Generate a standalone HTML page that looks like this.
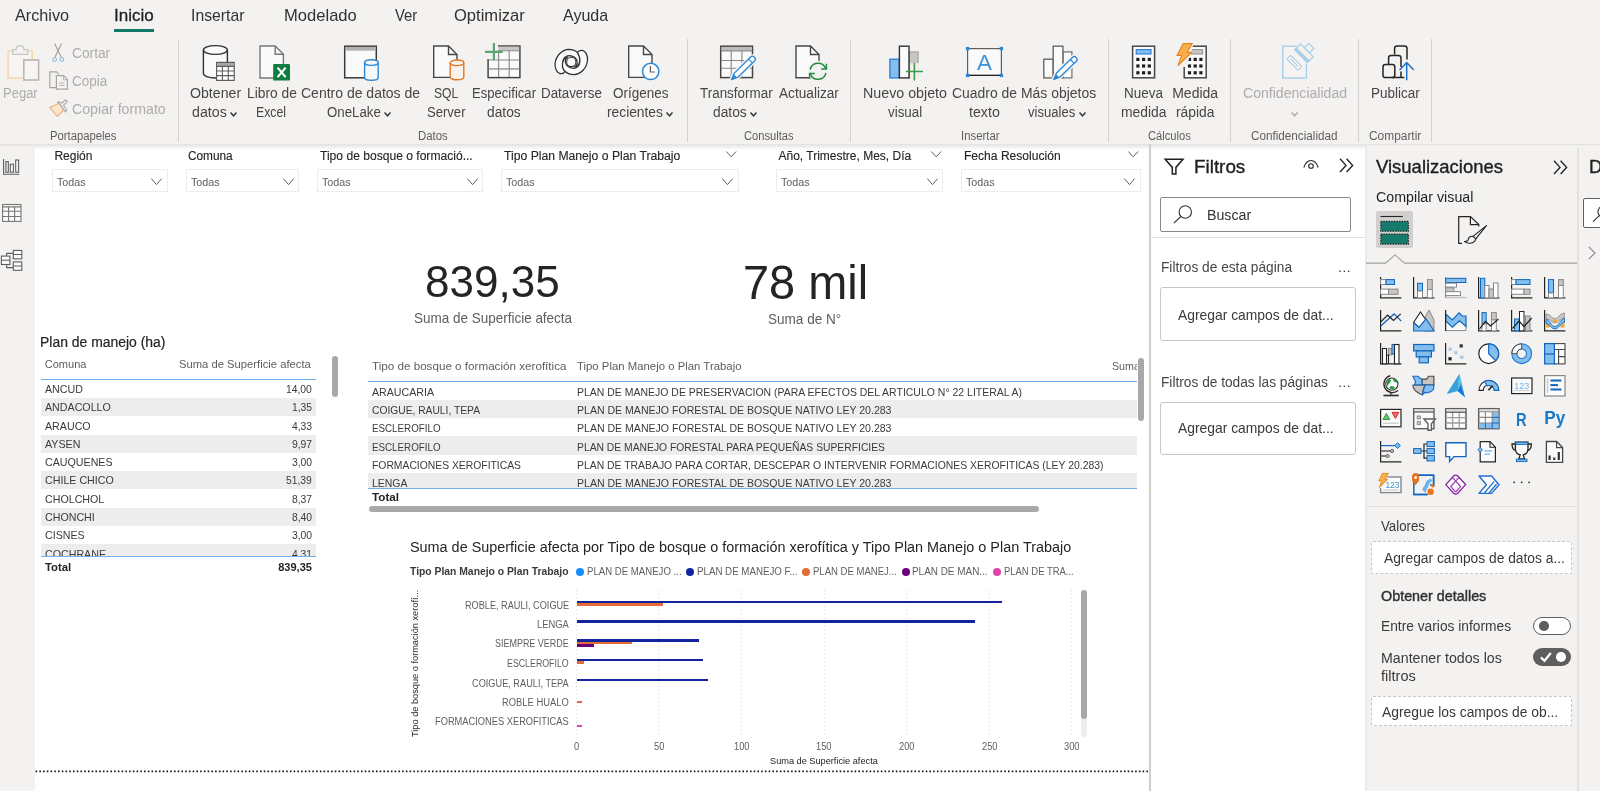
<!DOCTYPE html>
<html lang="es"><head><meta charset="utf-8"><title>Power BI Desktop</title>
<style>
html,body{margin:0;padding:0;}
body{width:1600px;height:791px;overflow:hidden;position:relative;background:#fff;font-family:"Liberation Sans",sans-serif;}
.t{position:absolute;white-space:nowrap;transform-origin:0 0;display:block;}
.b{position:absolute;}
.i{position:absolute;overflow:visible;}
</style></head><body>
<div id="app" style="position:absolute;left:0;top:0;width:1600px;height:791px;will-change:transform;">
<div id="ribbon">
<div class="b " style="left:0.00px;top:0.00px;width:1600.00px;height:144.00px;background:#f3f2f1;"></div>
<div class="b " style="left:0.00px;top:143.50px;width:1600.00px;height:6.50px;background:linear-gradient(#e2e1df,rgba(255,255,255,0));"></div>
</div>
<div class="b " style="left:0.00px;top:144.00px;width:35.00px;height:647.00px;background:#f3f2f1;"></div>
<div class="b " style="left:0.00px;top:144.00px;width:35.00px;height:3.00px;background:linear-gradient(#e2e1df,#f3f2f1);"></div>
<span class="t " style="left:14.70px;top:7.20px;font-size:17px;line-height:17px;color:#323130;transform:scaleX(0.9543);">Archivo</span>
<span class="t " style="left:114.00px;top:7.20px;font-size:17px;line-height:17px;color:#201f1e;-webkit-text-stroke:0.3px #201f1e;">Inicio</span>
<div class="b " style="left:114.00px;top:29.30px;width:40.00px;height:2.70px;background:#117865;"></div>
<span class="t " style="left:191.40px;top:7.20px;font-size:17px;line-height:17px;color:#323130;transform:scaleX(0.9265);">Insertar</span>
<span class="t " style="left:283.70px;top:7.20px;font-size:17px;line-height:17px;color:#323130;transform:scaleX(0.9750);">Modelado</span>
<span class="t " style="left:394.50px;top:7.20px;font-size:17px;line-height:17px;color:#323130;transform:scaleX(0.8700);">Ver</span>
<span class="t " style="left:453.90px;top:7.20px;font-size:17px;line-height:17px;color:#323130;transform:scaleX(0.9734);">Optimizar</span>
<span class="t " style="left:562.60px;top:7.20px;font-size:17px;line-height:17px;color:#323130;transform:scaleX(0.9437);">Ayuda</span>
<div class="b " style="left:177.80px;top:39.00px;width:1.00px;height:102.50px;background:#d2d0ce;"></div>
<div class="b " style="left:687.00px;top:39.00px;width:1.00px;height:102.50px;background:#d2d0ce;"></div>
<div class="b " style="left:850.10px;top:39.00px;width:1.00px;height:102.50px;background:#d2d0ce;"></div>
<div class="b " style="left:1108.00px;top:39.00px;width:1.00px;height:102.50px;background:#d2d0ce;"></div>
<div class="b " style="left:1230.10px;top:39.00px;width:1.00px;height:102.50px;background:#d2d0ce;"></div>
<div class="b " style="left:1358.00px;top:39.00px;width:1.00px;height:102.50px;background:#d2d0ce;"></div>
<div class="b " style="left:1430.90px;top:39.00px;width:1.00px;height:102.50px;background:#d2d0ce;"></div>
<span class="t " style="left:3.30px;top:86.20px;font-size:14px;line-height:14px;color:#aeacaa;transform:scaleX(0.9288);">Pegar</span>
<span class="t " style="left:72.30px;top:46.20px;font-size:14px;line-height:14px;color:#aeacaa;transform:scaleX(0.9821);">Cortar</span>
<span class="t " style="left:72.30px;top:74.20px;font-size:14px;line-height:14px;color:#aeacaa;transform:scaleX(0.9623);">Copia</span>
<span class="t " style="left:72.30px;top:102.20px;font-size:14px;line-height:14px;color:#aeacaa;transform:scaleX(1.0119);">Copiar formato</span>
<span class="t " style="left:50.00px;top:130.20px;font-size:12px;line-height:12px;color:#605e5c;transform:scaleX(0.9375);">Portapapeles</span>
<span class="t " style="left:190.40px;top:86.20px;font-size:14px;line-height:14px;color:#484644;transform:scaleX(1.0101);">Obtener</span>
<span class="t " style="left:191.70px;top:105.20px;font-size:14px;line-height:14px;color:#484644;transform:scaleX(1.0161);">datos</span>
<svg class="i" style="left:229.70px;top:111.50px;" width="7" height="4.8" viewBox="0 0 7 4.8" fill="none"><path d="M0.5 0.5 L3.5 3.8 L6.5 0.5" stroke="#3b3a39" stroke-width="1.5" fill="none"/></svg>
<span class="t " style="left:246.50px;top:86.20px;font-size:14px;line-height:14px;color:#484644;transform:scaleX(0.9843);">Libro de</span>
<span class="t " style="left:256.40px;top:105.20px;font-size:14px;line-height:14px;color:#484644;transform:scaleX(0.8792);">Excel</span>
<span class="t " style="left:301.00px;top:86.20px;font-size:14px;line-height:14px;color:#484644;">Centro de datos de</span>
<span class="t " style="left:326.70px;top:105.20px;font-size:14px;line-height:14px;color:#484644;transform:scaleX(0.9468);">OneLake</span>
<svg class="i" style="left:383.70px;top:111.50px;" width="7" height="4.8" viewBox="0 0 7 4.8" fill="none"><path d="M0.5 0.5 L3.5 3.8 L6.5 0.5" stroke="#3b3a39" stroke-width="1.5" fill="none"/></svg>
<span class="t " style="left:433.60px;top:86.20px;font-size:14px;line-height:14px;color:#484644;transform:scaleX(0.8674);">SQL</span>
<span class="t " style="left:426.50px;top:105.20px;font-size:14px;line-height:14px;color:#484644;transform:scaleX(0.9336);">Server</span>
<span class="t " style="left:472.00px;top:86.20px;font-size:14px;line-height:14px;color:#484644;transform:scaleX(0.9347);">Especificar</span>
<span class="t " style="left:487.20px;top:105.20px;font-size:14px;line-height:14px;color:#484644;transform:scaleX(0.9840);">datos</span>
<span class="t " style="left:541.00px;top:86.20px;font-size:14px;line-height:14px;color:#484644;transform:scaleX(0.9529);">Dataverse</span>
<span class="t " style="left:613.00px;top:86.20px;font-size:14px;line-height:14px;color:#484644;transform:scaleX(0.9638);">Orígenes</span>
<span class="t " style="left:606.60px;top:105.20px;font-size:14px;line-height:14px;color:#484644;transform:scaleX(0.9840);">recientes</span>
<svg class="i" style="left:665.70px;top:111.50px;" width="7" height="4.8" viewBox="0 0 7 4.8" fill="none"><path d="M0.5 0.5 L3.5 3.8 L6.5 0.5" stroke="#3b3a39" stroke-width="1.5" fill="none"/></svg>
<span class="t " style="left:418.20px;top:130.20px;font-size:12px;line-height:12px;color:#605e5c;transform:scaleX(0.9506);">Datos</span>
<span class="t " style="left:700.40px;top:86.20px;font-size:14px;line-height:14px;color:#484644;transform:scaleX(0.9588);">Transformar</span>
<span class="t " style="left:712.80px;top:105.20px;font-size:14px;line-height:14px;color:#484644;transform:scaleX(0.9840);">datos</span>
<svg class="i" style="left:749.70px;top:111.50px;" width="7" height="4.8" viewBox="0 0 7 4.8" fill="none"><path d="M0.5 0.5 L3.5 3.8 L6.5 0.5" stroke="#3b3a39" stroke-width="1.5" fill="none"/></svg>
<span class="t " style="left:778.50px;top:86.20px;font-size:14px;line-height:14px;color:#484644;transform:scaleX(0.9744);">Actualizar</span>
<span class="t " style="left:744.40px;top:130.20px;font-size:12px;line-height:12px;color:#605e5c;transform:scaleX(0.9276);">Consultas</span>
<span class="t " style="left:863.20px;top:86.20px;font-size:14px;line-height:14px;color:#484644;transform:scaleX(1.0181);">Nuevo objeto</span>
<span class="t " style="left:888.00px;top:105.20px;font-size:14px;line-height:14px;color:#484644;transform:scaleX(0.9527);">visual</span>
<span class="t " style="left:951.70px;top:86.20px;font-size:14px;line-height:14px;color:#484644;transform:scaleX(0.9942);">Cuadro de</span>
<span class="t " style="left:968.90px;top:105.20px;font-size:14px;line-height:14px;color:#484644;transform:scaleX(1.0148);">texto</span>
<span class="t " style="left:1021.20px;top:86.20px;font-size:14px;line-height:14px;color:#484644;transform:scaleX(0.9949);">Más objetos</span>
<span class="t " style="left:1028.30px;top:105.20px;font-size:14px;line-height:14px;color:#484644;transform:scaleX(0.9332);">visuales</span>
<svg class="i" style="left:1078.70px;top:111.50px;" width="7" height="4.8" viewBox="0 0 7 4.8" fill="none"><path d="M0.5 0.5 L3.5 3.8 L6.5 0.5" stroke="#3b3a39" stroke-width="1.5" fill="none"/></svg>
<span class="t " style="left:960.60px;top:130.20px;font-size:12px;line-height:12px;color:#605e5c;transform:scaleX(0.9488);">Insertar</span>
<span class="t " style="left:1124.40px;top:86.20px;font-size:14px;line-height:14px;color:#484644;transform:scaleX(0.9612);">Nueva</span>
<span class="t " style="left:1121.10px;top:105.20px;font-size:14px;line-height:14px;color:#484644;transform:scaleX(0.9909);">medida</span>
<span class="t " style="left:1172.20px;top:86.20px;font-size:14px;line-height:14px;color:#484644;">Medida</span>
<span class="t " style="left:1176.00px;top:105.20px;font-size:14px;line-height:14px;color:#484644;transform:scaleX(0.9867);">rápida</span>
<span class="t " style="left:1148.40px;top:130.20px;font-size:12px;line-height:12px;color:#605e5c;transform:scaleX(0.9278);">Cálculos</span>
<span class="t " style="left:1242.50px;top:86.20px;font-size:14px;line-height:14px;color:#aeacaa;transform:scaleX(1.0056);">Confidencialidad</span>
<svg class="i" style="left:1291.00px;top:111.50px;" width="7" height="4.8" viewBox="0 0 7 4.8" fill="none"><path d="M0.5 0.5 L3.5 3.8 L6.5 0.5" stroke="#aeacaa" stroke-width="1.5" fill="none"/></svg>
<span class="t " style="left:1251.30px;top:130.20px;font-size:12px;line-height:12px;color:#605e5c;transform:scaleX(0.9749);">Confidencialidad</span>
<span class="t " style="left:1371.20px;top:86.20px;font-size:14px;line-height:14px;color:#484644;transform:scaleX(0.9648);">Publicar</span>
<span class="t " style="left:1369.40px;top:130.20px;font-size:12px;line-height:12px;color:#605e5c;transform:scaleX(0.9928);">Compartir</span>
<svg class="i" style="left:0;top:0" width="1600" height="144" viewBox="0 0 1600 144" fill="none"><rect x="8.2" y="50.8" width="24" height="27.2" fill="#f6f5f4" stroke="#f4d9ae" stroke-width="1.7"/><path d="M12.6 54.4 V49.6 H16.2 C16.2 44.4 24 44.4 24 49.6 H27.6 V54.4 Z" fill="#f3f2f1" stroke="#c8c6c4" stroke-width="1.3"/><rect x="23.8" y="60" width="14.8" height="20" fill="#f6f5f4" stroke="#b5b3b1" stroke-width="1.5"/><path d="M54.6 43.6 L61.4 57.4 M61.6 43.6 L54.8 57.4" stroke="#a19f9d" stroke-width="1.1"/><circle cx="54.6" cy="59.6" r="1.9" stroke="#8db9dc" stroke-width="1.1" fill="none"/><circle cx="61.8" cy="59.6" r="1.9" stroke="#8db9dc" stroke-width="1.1" fill="none"/><path d="M56 87.6 H49.8 V71.9 H56.5 L59 74.4" stroke="#a8a6a4" stroke-width="1.2" fill="none"/><path d="M56.4 75.6 H63.6 L67.4 79.6 V89.2 H56.4 Z" stroke="#a8a6a4" stroke-width="1.2" fill="#f5f4f3"/><path d="M63.4 75.8 V79.8 H67.2 M59.2 83 H64.6 M59.2 85.4 H64.6" stroke="#b5b3b1" stroke-width="1" fill="none"/><path d="M49.8 107.6 L59 103.2 L63.8 110 L57.4 116.4 Z" fill="#fbe6cd" stroke="#f0b27a" stroke-width="1.2" stroke-linejoin="round"/><path d="M57.6 101.8 L61 105.6 L65.4 112 L66.8 110.2 L63.6 105.2 L67.4 101.6 L65.6 99.6 L62 103 Z" fill="#f5f4f3" stroke="#a8a6a4" stroke-width="1.1" stroke-linejoin="round"/><path d="M203.4 50.0 V73.6 A12.0 4.4 0 0 0 227.4 73.6 V50.0 A12.0 4.4 0 0 0 203.4 50.0 Z" fill="#fafafa" stroke="#323130" stroke-width="1.4"/><path d="M203.4 50.0 A12.0 4.4 0 0 0 227.4 50.0" fill="none" stroke="#323130" stroke-width="1.4"/><rect x="216.6" y="62.4" width="17.6" height="18" fill="#fff" stroke="#605e5c" stroke-width="1.2"/><rect x="217.2" y="63" width="16.4" height="3.2" fill="#a8a6a4"/><path d="M222.4 66 V80.4 M228.3 66 V80.4 M216.6 66.4 H234.2 M216.6 71 H234.2 M216.6 75.6 H234.2" stroke="#605e5c" stroke-width="1.1"/><path d="M260 46 H275.2 L283.4 54.2 V78 H260 Z" fill="#fafafa" stroke="#797775" stroke-width="1.4" stroke-linejoin="miter"/><path d="M275.2 46 V54.2 H283.4" fill="none" stroke="#797775" stroke-width="1.4"/><rect x="273.2" y="64" width="16.8" height="16.6" rx="1.2" fill="#107c41"/><path d="M277.6 67.6 L285.6 77.2 M285.6 67.6 L277.6 77.2" stroke="#fff" stroke-width="2.1"/><rect x="344.7" y="46.2" width="31.6" height="31.6" fill="#fafafa" stroke="#3b3a39" stroke-width="1.5"/><rect x="345.4" y="46.9" width="30.2" height="3.8" fill="#b3b0ad"/><path d="M364.6 62.599999999999994 V77.4 A6.799999999999983 2.8 0 0 0 378.2 77.4 V62.599999999999994 A6.799999999999983 2.8 0 0 0 364.6 62.599999999999994 Z" fill="#f8f8f8" stroke="#2b88d8" stroke-width="1.4"/><path d="M364.6 62.599999999999994 A6.799999999999983 2.8 0 0 0 378.2 62.599999999999994" fill="none" stroke="#2b88d8" stroke-width="1.4"/><path d="M433.7 46 H448.5 L457 54.5 V77.4 H433.7 Z" fill="#fafafa" stroke="#484644" stroke-width="1.4" stroke-linejoin="miter"/><path d="M448.5 46 V54.5 H457" fill="none" stroke="#484644" stroke-width="1.4"/><path d="M450.2 62.8 V77.0 A6.800000000000011 2.8 0 0 0 463.8 77.0 V62.8 A6.800000000000011 2.8 0 0 0 450.2 62.8 Z" fill="#fbf3ec" stroke="#e27a2e" stroke-width="1.4"/><path d="M450.2 62.8 A6.800000000000011 2.8 0 0 0 463.8 62.8" fill="none" stroke="#e27a2e" stroke-width="1.4"/><rect x="488.1" y="46" width="31.8" height="31.6" fill="#fafafa" stroke="#484644" stroke-width="1.5"/><rect x="498.4" y="46.7" width="20.8" height="3.6" fill="#c8c6c4"/><path d="M498.6 50 V77 M509.2 50 V77 M488.6 60 H519.4 M488.6 68.9 H519.4 M498 50.8 H519.4" stroke="#8a8886" stroke-width="1.1"/><rect x="484" y="42" width="14" height="17" fill="#f3f2f1"/><path d="M493.9 43 V60 M485 51.8 H502.8" stroke="#5da271" stroke-width="2.2"/><g transform="translate(545 42) scale(0.05056)" stroke="#323130" stroke-width="25" fill="#fafafa" stroke-linejoin="round"><path d="M640 205 C590 160 530 145 470 145 C330 150 215 280 200 420 C190 530 240 615 300 625 C350 632 385 610 400 580 C365 530 345 470 350 400 C355 320 410 270 480 270 C560 270 625 320 635 385 C642 430 620 475 590 495 C650 480 690 420 695 350 C700 290 680 240 640 205 Z"/><path d="M640 205 C590 160 530 145 470 145 C330 150 215 280 200 420 C190 530 240 615 300 625 C350 632 385 610 400 580 C365 530 345 470 350 400 C355 320 410 270 480 270 C560 270 625 320 635 385 C642 430 620 475 590 495 C650 480 690 420 695 350 C700 290 680 240 640 205 Z" transform="rotate(180 520 395)"/><circle cx="520" cy="395" r="92" stroke-width="21"/></g><path d="M628.7 46 H643.5 L652 54.5 V77.4 H628.7 Z" fill="#fafafa" stroke="#484644" stroke-width="1.4" stroke-linejoin="miter"/><path d="M643.5 46 V54.5 H652" fill="none" stroke="#484644" stroke-width="1.4"/><circle cx="650.7" cy="71.4" r="8.2" fill="#fdfdfd" stroke="#2b88d8" stroke-width="1.5"/><path d="M650.4 66 V72 H655" stroke="#605e5c" stroke-width="1.2" fill="none"/><rect x="720.7" y="46.2" width="31.8" height="31.4" fill="#fafafa" stroke="#484644" stroke-width="1.5"/><rect x="721.4" y="46.9" width="30.4" height="3.8" fill="#bebbb8"/><path d="M731.2 50.6 V77 M741.9 50.6 V77 M721 60.5 H752 M721 68.2 H752 M721 50.9 H752" stroke="#8a8886" stroke-width="1.1"/><g transform="translate(731.6 79.6) rotate(-44.49)"><path d="M0 0 L6.5 -2.7 H29.762478001556726 A2.2 2.7 0 0 1 29.762478001556726 2.7 H6.5 Z" fill="#f3f2f1" stroke="#f3f2f1" stroke-width="4.2" stroke-linejoin="round"/><path d="M0 0 L6.5 -2.7 H29.762478001556726 A2.2 2.7 0 0 1 29.762478001556726 2.7 H6.5 Z" fill="#fff" stroke="#2b88d8" stroke-width="1.3" stroke-linejoin="round"/><path d="M0 0 L5 -2.079 V2.079 Z" fill="#2b88d8" stroke="#2b88d8" stroke-width="0.8"/><path d="M26.462478001556725 -2.7 V2.7" stroke="#2b88d8" stroke-width="1.1"/></g><path d="M796 46 H810.5 L819 54.5 V77.8 H796 Z" fill="#fafafa" stroke="#484644" stroke-width="1.4" stroke-linejoin="miter"/><path d="M810.5 46 V54.5 H819" fill="none" stroke="#484644" stroke-width="1.4"/><circle cx="818" cy="71.2" r="10.4" fill="#f3f2f1"/><path d="M810.2 69.6 A8 8 0 0 1 825.6 68.6 M825.9 72.8 A8 8 0 0 1 810.5 73.9" stroke="#218d41" stroke-width="1.5" fill="none"/><path d="M826.4 63.8 V69 H821.2 M809.6 78.6 V73.4 H814.8" stroke="#218d41" stroke-width="1.5" fill="none"/><rect x="909.1" y="51.9" width="9" height="26" fill="#c8c6c4" stroke="#a8a6a4" stroke-width="1.2"/><rect x="889.9" y="59.2" width="9.4" height="18.7" fill="#83beec" stroke="#2b7cd3" stroke-width="1.3"/><rect x="899.4" y="46.2" width="9.6" height="31.7" fill="#fafafa" stroke="#323130" stroke-width="1.4"/><rect x="910.2" y="63.2" width="8.6" height="15.6" fill="#f3f2f1"/><path d="M914.4 63 V80.4 M905.8 71.5 H923" stroke="#3c9a4e" stroke-width="1.6"/><rect x="967.6" y="48.6" width="33.8" height="26.8" fill="#fafafa" stroke="#605e5c" stroke-width="1.2"/><path d="M967.6 75.4 H1001.4" stroke="#252423" stroke-width="1.3"/><rect x="965.9" y="46.9" width="3.4" height="3.4" fill="#2b88d8"/><rect x="999.6999999999999" y="46.9" width="3.4" height="3.4" fill="#2b88d8"/><rect x="965.9" y="73.7" width="3.4" height="3.4" fill="#2b88d8"/><rect x="999.6999999999999" y="73.7" width="3.4" height="3.4" fill="#2b88d8"/><text x="984.5" y="69.9" font-family="Liberation Sans, sans-serif" font-size="22.4" fill="#3a93dd" text-anchor="middle">A</text><rect x="1062.9" y="51.9" width="9" height="26" fill="#fafafa" stroke="#797775" stroke-width="1.3"/><rect x="1043.8" y="59.2" width="9.4" height="18.7" fill="#fafafa" stroke="#605e5c" stroke-width="1.3"/><rect x="1053.2" y="46.2" width="9.7" height="31.7" fill="#fafafa" stroke="#605e5c" stroke-width="1.3"/><g transform="translate(1053.8 79.4) rotate(-44.22)"><path d="M0 0 L6.5 -2.7 H29.056999216175637 A2.2 2.7 0 0 1 29.056999216175637 2.7 H6.5 Z" fill="#f3f2f1" stroke="#f3f2f1" stroke-width="4.2" stroke-linejoin="round"/><path d="M0 0 L6.5 -2.7 H29.056999216175637 A2.2 2.7 0 0 1 29.056999216175637 2.7 H6.5 Z" fill="#fff" stroke="#2b88d8" stroke-width="1.3" stroke-linejoin="round"/><path d="M0 0 L5 -2.079 V2.079 Z" fill="#2b88d8" stroke="#2b88d8" stroke-width="0.8"/><path d="M25.756999216175636 -2.7 V2.7" stroke="#2b88d8" stroke-width="1.1"/></g><rect x="1132.6" y="46.2" width="22" height="31.6" fill="#fafafa" stroke="#484644" stroke-width="1.5"/><rect x="1136.1999999999998" y="49.6" width="14.8" height="4.4" fill="#83beec" stroke="#2b7cd3" stroke-width="1.1"/><rect x="1136.3" y="57.8" width="3.2" height="3.2" fill="#201f1e"/><rect x="1136.3" y="64.4" width="3.2" height="3.2" fill="#201f1e"/><rect x="1136.3" y="71.2" width="3.2" height="3.2" fill="#201f1e"/><rect x="1142.0" y="57.8" width="3.2" height="3.2" fill="#201f1e"/><rect x="1142.0" y="64.4" width="3.2" height="3.2" fill="#201f1e"/><rect x="1142.0" y="71.2" width="3.2" height="3.2" fill="#201f1e"/><rect x="1147.7" y="57.8" width="3.2" height="3.2" fill="#201f1e"/><rect x="1147.7" y="64.4" width="3.2" height="3.2" fill="#201f1e"/><rect x="1147.7" y="71.2" width="3.2" height="3.2" fill="#201f1e"/><rect x="1184.2" y="46.2" width="22" height="31.6" fill="#fafafa" stroke="#484644" stroke-width="1.5"/><rect x="1187.8" y="49.6" width="14.8" height="4.4" fill="#c8c6c4" stroke="#979593" stroke-width="1.1"/><rect x="1187.9" y="57.8" width="3.2" height="3.2" fill="#201f1e"/><rect x="1187.9" y="64.4" width="3.2" height="3.2" fill="#201f1e"/><rect x="1187.9" y="71.2" width="3.2" height="3.2" fill="#201f1e"/><rect x="1193.6000000000001" y="57.8" width="3.2" height="3.2" fill="#201f1e"/><rect x="1193.6000000000001" y="64.4" width="3.2" height="3.2" fill="#201f1e"/><rect x="1193.6000000000001" y="71.2" width="3.2" height="3.2" fill="#201f1e"/><rect x="1199.3000000000002" y="57.8" width="3.2" height="3.2" fill="#201f1e"/><rect x="1199.3000000000002" y="64.4" width="3.2" height="3.2" fill="#201f1e"/><rect x="1199.3000000000002" y="71.2" width="3.2" height="3.2" fill="#201f1e"/><path d="M1174 42 H1194 L1190 56 L1186 67 H1175 Z" fill="#f3f2f1"/><path d="M1183.2 43.6 H1192.2 L1187 52.4 H1191.6 L1178 65.6 L1181.6 55.4 H1177 Z" fill="#f9b04a" stroke="#e6821e" stroke-width="1.1" stroke-linejoin="miter"/><rect x="1282.8" y="46.2" width="23.6" height="31.8" fill="#f5f4f3" stroke="#a9cfe8" stroke-width="1.4"/><g transform="translate(1302.4 54.8) rotate(45)"><rect x="-10" y="-13.4" width="20" height="17" fill="#f3f2f1"/><rect x="-9" y="-6.4" width="18" height="6" fill="#f3f2f1" stroke="#a9cfe8" stroke-width="1.2"/><rect x="-9.6" y="-0.6" width="19.2" height="3.2" fill="#a9cfe8"/><rect x="-3.6" y="-12.6" width="7.2" height="6.2" fill="#f3f2f1" stroke="#a9cfe8" stroke-width="1.2"/><rect x="-8" y="8.6" width="16" height="5.4" rx="1.4" fill="#f5f4f3" stroke="#a9cfe8" stroke-width="1.1"/><path d="M-5.4 11.3 H5.4" stroke="#a9cfe8" stroke-width="1"/></g><path d="M1394.6 54.6 V48.2 Q1394.6 45.9 1397 45.9 H1404.6 Q1407 45.9 1407 48.2 V59.6" stroke="#252423" stroke-width="1.5" fill="none"/><path d="M1388.6 64 V57.8 Q1388.6 55.5 1391 55.5 H1398.6 Q1401 55.5 1401 57.8 V67 M1401 71.6 V77.4" stroke="#252423" stroke-width="1.5" fill="none"/><rect x="1383" y="64.6" width="11.8" height="13" rx="2.4" stroke="#252423" stroke-width="1.5" fill="none"/><path d="M1392 77.5 H1404.4" stroke="#252423" stroke-width="1.5"/><path d="M1406.7 80.2 V62.8 M1399.6 69.9 L1406.7 62.6 L1413.8 69.9" stroke="#1a73c7" stroke-width="1.5" fill="none"/></svg>
<div id="canvas">
<span class="t " style="left:54.40px;top:150.20px;font-size:12px;line-height:12px;color:#252423;-webkit-text-stroke:0.12px #252423;">Región</span>
<div class="b " style="left:52.30px;top:169.00px;width:115.30px;height:22.80px;background:#fff;border:1px solid #ededed;box-sizing:border-box;"></div>
<span class="t " style="left:57.40px;top:176.70px;font-size:11px;line-height:11px;color:#605e5c;transform:scaleX(0.9743);">Todas</span>
<svg class="i" style="left:151.10px;top:178.20px;" width="11" height="8" viewBox="0 0 11 8" fill="none"><path d="M0.3 0.6 L5.5 6.6 L10.7 0.6" stroke="#605e5c" stroke-width="1"/></svg>
<span class="t " style="left:188.40px;top:150.20px;font-size:12px;line-height:12px;color:#252423;transform:scaleX(0.9855);-webkit-text-stroke:0.12px #252423;">Comuna</span>
<div class="b " style="left:186.30px;top:169.00px;width:112.80px;height:22.80px;background:#fff;border:1px solid #ededed;box-sizing:border-box;"></div>
<span class="t " style="left:191.40px;top:176.70px;font-size:11px;line-height:11px;color:#605e5c;transform:scaleX(0.9743);">Todas</span>
<svg class="i" style="left:282.60px;top:178.20px;" width="11" height="8" viewBox="0 0 11 8" fill="none"><path d="M0.3 0.6 L5.5 6.6 L10.7 0.6" stroke="#605e5c" stroke-width="1"/></svg>
<span class="t " style="left:319.80px;top:150.20px;font-size:12px;line-height:12px;color:#252423;transform:scaleX(1.0070);-webkit-text-stroke:0.12px #252423;">Tipo de bosque o formació...</span>
<div class="b " style="left:317.30px;top:169.00px;width:166.10px;height:22.80px;background:#fff;border:1px solid #ededed;box-sizing:border-box;"></div>
<span class="t " style="left:322.40px;top:176.70px;font-size:11px;line-height:11px;color:#605e5c;transform:scaleX(0.9743);">Todas</span>
<svg class="i" style="left:466.90px;top:178.20px;" width="11" height="8" viewBox="0 0 11 8" fill="none"><path d="M0.3 0.6 L5.5 6.6 L10.7 0.6" stroke="#605e5c" stroke-width="1"/></svg>
<span class="t " style="left:503.70px;top:150.20px;font-size:12px;line-height:12px;color:#252423;transform:scaleX(1.0152);-webkit-text-stroke:0.12px #252423;">Tipo Plan Manejo o Plan Trabajo</span>
<div class="b " style="left:501.10px;top:169.00px;width:237.70px;height:22.80px;background:#fff;border:1px solid #ededed;box-sizing:border-box;"></div>
<span class="t " style="left:506.20px;top:176.70px;font-size:11px;line-height:11px;color:#605e5c;transform:scaleX(0.9743);">Todas</span>
<svg class="i" style="left:722.30px;top:178.20px;" width="11" height="8" viewBox="0 0 11 8" fill="none"><path d="M0.3 0.6 L5.5 6.6 L10.7 0.6" stroke="#605e5c" stroke-width="1"/></svg>
<svg class="i" style="left:726.20px;top:151.00px;" width="11" height="7" viewBox="0 0 11 7" fill="none"><path d="M0.3 0.5 L5.2 5.8 L10.1 0.5" stroke="#605e5c" stroke-width="1"/></svg>
<span class="t " style="left:778.50px;top:150.20px;font-size:12px;line-height:12px;color:#252423;-webkit-text-stroke:0.12px #252423;">Año, Trimestre, Mes, Día</span>
<div class="b " style="left:775.60px;top:169.00px;width:167.80px;height:22.80px;background:#fff;border:1px solid #ededed;box-sizing:border-box;"></div>
<span class="t " style="left:780.70px;top:176.70px;font-size:11px;line-height:11px;color:#605e5c;transform:scaleX(0.9743);">Todas</span>
<svg class="i" style="left:926.90px;top:178.20px;" width="11" height="8" viewBox="0 0 11 8" fill="none"><path d="M0.3 0.6 L5.5 6.6 L10.7 0.6" stroke="#605e5c" stroke-width="1"/></svg>
<svg class="i" style="left:930.80px;top:151.00px;" width="11" height="7" viewBox="0 0 11 7" fill="none"><path d="M0.3 0.5 L5.2 5.8 L10.1 0.5" stroke="#605e5c" stroke-width="1"/></svg>
<span class="t " style="left:963.80px;top:150.20px;font-size:12px;line-height:12px;color:#252423;transform:scaleX(1.0057);-webkit-text-stroke:0.12px #252423;">Fecha Resolución</span>
<div class="b " style="left:961.30px;top:169.00px;width:179.30px;height:22.80px;background:#fff;border:1px solid #ededed;box-sizing:border-box;"></div>
<span class="t " style="left:966.40px;top:176.70px;font-size:11px;line-height:11px;color:#605e5c;transform:scaleX(0.9743);">Todas</span>
<svg class="i" style="left:1124.10px;top:178.20px;" width="11" height="8" viewBox="0 0 11 8" fill="none"><path d="M0.3 0.6 L5.5 6.6 L10.7 0.6" stroke="#605e5c" stroke-width="1"/></svg>
<svg class="i" style="left:1127.80px;top:151.00px;" width="11" height="7" viewBox="0 0 11 7" fill="none"><path d="M0.3 0.5 L5.2 5.8 L10.1 0.5" stroke="#605e5c" stroke-width="1"/></svg>
<span class="t " style="left:425.30px;top:259.20px;font-size:45px;line-height:45px;color:#252423;transform:scaleX(0.9786);">839,35</span>
<span class="t " style="left:413.90px;top:310.20px;font-size:15px;line-height:15px;color:#605e5c;transform:scaleX(0.8986);">Suma de Superficie afecta</span>
<span class="t " style="left:742.60px;top:258.95px;font-size:47.5px;line-height:47.5px;color:#252423;transform:scaleX(0.9873);">78 mil</span>
<span class="t " style="left:768.00px;top:311.20px;font-size:15px;line-height:15px;color:#605e5c;transform:scaleX(0.9033);">Suma de N°</span>
<span class="t " style="left:39.90px;top:335.20px;font-size:14px;line-height:14px;color:#252423;transform:scaleX(0.9954);-webkit-text-stroke:0.2px #252423;">Plan de manejo (ha)</span>
<span class="t " style="left:44.80px;top:358.70px;font-size:11px;line-height:11px;color:#605e5c;">Comuna</span>
<span class="t " style="left:178.60px;top:358.70px;font-size:11px;line-height:11px;color:#605e5c;transform:scaleX(1.0215);">Suma de Superficie afecta</span>
<div class="b " style="left:40.50px;top:378.80px;width:275.50px;height:1.00px;background:#6cb0ee;"></div>
<div class="b" style="left:40px;top:380px;width:276px;height:176.2px;overflow:hidden;">
<span class="t " style="left:4.80px;top:3.70px;font-size:11px;line-height:11px;color:#3b3a39;transform:scaleX(0.9700);">ANCUD</span>
<span class="t " style="left:245.82px;top:3.70px;font-size:11px;line-height:11px;color:#3b3a39;transform:scaleX(0.9400);">14,00</span>
<div class="b " style="left:0.50px;top:17.97px;width:275.50px;height:18.30px;background:#ededed;"></div>
<span class="t " style="left:4.80px;top:21.70px;font-size:11px;line-height:11px;color:#3b3a39;transform:scaleX(0.9700);">ANDACOLLO</span>
<span class="t " style="left:251.57px;top:21.70px;font-size:11px;line-height:11px;color:#3b3a39;transform:scaleX(0.9400);">1,35</span>
<span class="t " style="left:4.80px;top:40.70px;font-size:11px;line-height:11px;color:#3b3a39;transform:scaleX(0.9700);">ARAUCO</span>
<span class="t " style="left:251.57px;top:40.70px;font-size:11px;line-height:11px;color:#3b3a39;transform:scaleX(0.9400);">4,33</span>
<div class="b " style="left:0.50px;top:54.51px;width:275.50px;height:18.30px;background:#ededed;"></div>
<span class="t " style="left:4.80px;top:58.70px;font-size:11px;line-height:11px;color:#3b3a39;transform:scaleX(0.9700);">AYSEN</span>
<span class="t " style="left:251.57px;top:58.70px;font-size:11px;line-height:11px;color:#3b3a39;transform:scaleX(0.9400);">9,97</span>
<span class="t " style="left:4.80px;top:76.70px;font-size:11px;line-height:11px;color:#3b3a39;transform:scaleX(0.9700);">CAUQUENES</span>
<span class="t " style="left:251.57px;top:76.70px;font-size:11px;line-height:11px;color:#3b3a39;transform:scaleX(0.9400);">3,00</span>
<div class="b " style="left:0.50px;top:91.05px;width:275.50px;height:18.30px;background:#ededed;"></div>
<span class="t " style="left:4.80px;top:94.70px;font-size:11px;line-height:11px;color:#3b3a39;transform:scaleX(0.9700);">CHILE CHICO</span>
<span class="t " style="left:245.82px;top:94.70px;font-size:11px;line-height:11px;color:#3b3a39;transform:scaleX(0.9400);">51,39</span>
<span class="t " style="left:4.80px;top:113.70px;font-size:11px;line-height:11px;color:#3b3a39;transform:scaleX(0.9700);">CHOLCHOL</span>
<span class="t " style="left:251.57px;top:113.70px;font-size:11px;line-height:11px;color:#3b3a39;transform:scaleX(0.9400);">8,37</span>
<div class="b " style="left:0.50px;top:127.59px;width:275.50px;height:18.30px;background:#ededed;"></div>
<span class="t " style="left:4.80px;top:131.70px;font-size:11px;line-height:11px;color:#3b3a39;transform:scaleX(0.9700);">CHONCHI</span>
<span class="t " style="left:251.57px;top:131.70px;font-size:11px;line-height:11px;color:#3b3a39;transform:scaleX(0.9400);">8,40</span>
<span class="t " style="left:4.80px;top:149.70px;font-size:11px;line-height:11px;color:#3b3a39;transform:scaleX(0.9700);">CISNES</span>
<span class="t " style="left:251.57px;top:149.70px;font-size:11px;line-height:11px;color:#3b3a39;transform:scaleX(0.9400);">3,00</span>
<div class="b " style="left:0.50px;top:164.13px;width:275.50px;height:18.30px;background:#ededed;"></div>
<span class="t " style="left:4.80px;top:168.70px;font-size:11px;line-height:11px;color:#3b3a39;transform:scaleX(0.9700);">COCHRANE</span>
<span class="t " style="left:251.57px;top:168.70px;font-size:11px;line-height:11px;color:#3b3a39;transform:scaleX(0.9400);">4,31</span>
</div>
<div class="b " style="left:40.50px;top:555.70px;width:275.50px;height:1.00px;background:#6cb0ee;"></div>
<span class="t " style="left:44.80px;top:561.70px;font-size:11px;line-height:11px;color:#252423;font-weight:bold;transform:scaleX(1.0291);">Total</span>
<span class="t " style="left:278.25px;top:561.70px;font-size:11px;line-height:11px;color:#252423;font-weight:bold;">839,35</span>
<div class="b " style="left:332.40px;top:355.60px;width:6.00px;height:41.80px;background:#a8a8a8;border-radius:3px;"></div>
<span class="t " style="left:371.50px;top:360.70px;font-size:11px;line-height:11px;color:#605e5c;transform:scaleX(1.0591);">Tipo de bosque o formación xerofítica</span>
<span class="t " style="left:576.50px;top:360.70px;font-size:11px;line-height:11px;color:#605e5c;transform:scaleX(1.0333);">Tipo Plan Manejo o Plan Trabajo</span>
<div class="b" style="left:1100px;top:358px;width:37.3px;height:20px;overflow:hidden;">
<span class="t " style="left:11.60px;top:2.70px;font-size:11px;line-height:11px;color:#605e5c;transform:scaleX(0.9700);">Suma de</span>
</div>
<div class="b " style="left:367.50px;top:380.50px;width:769.00px;height:1.00px;background:#6cb0ee;"></div>
<div class="b" style="left:367px;top:382px;width:770px;height:106.5px;overflow:hidden;">
<span class="t " style="left:4.50px;top:4.70px;font-size:11px;line-height:11px;color:#3b3a39;transform:scaleX(0.9660);">ARAUCARIA</span>
<span class="t " style="left:209.50px;top:4.70px;font-size:11px;line-height:11px;color:#3b3a39;transform:scaleX(0.9526);">PLAN DE MANEJO DE PRESERVACION (PARA EFECTOS DEL ARTICULO N° 22 LITERAL A)</span>
<div class="b " style="left:0.50px;top:17.95px;width:769.00px;height:18.30px;background:#ededed;"></div>
<span class="t " style="left:4.50px;top:22.70px;font-size:11px;line-height:11px;color:#3b3a39;transform:scaleX(0.9332);">COIGUE, RAULI, TEPA</span>
<span class="t " style="left:209.50px;top:22.70px;font-size:11px;line-height:11px;color:#3b3a39;transform:scaleX(0.9592);">PLAN DE MANEJO FORESTAL DE BOSQUE NATIVO LEY 20.283</span>
<span class="t " style="left:4.50px;top:40.70px;font-size:11px;line-height:11px;color:#3b3a39;transform:scaleX(0.8893);">ESCLEROFILO</span>
<span class="t " style="left:209.50px;top:40.70px;font-size:11px;line-height:11px;color:#3b3a39;transform:scaleX(0.9592);">PLAN DE MANEJO FORESTAL DE BOSQUE NATIVO LEY 20.283</span>
<div class="b " style="left:0.50px;top:54.45px;width:769.00px;height:18.30px;background:#ededed;"></div>
<span class="t " style="left:4.50px;top:59.70px;font-size:11px;line-height:11px;color:#3b3a39;transform:scaleX(0.8893);">ESCLEROFILO</span>
<span class="t " style="left:209.50px;top:59.70px;font-size:11px;line-height:11px;color:#3b3a39;transform:scaleX(0.9389);">PLAN DE MANEJO FORESTAL PARA PEQUEÑAS SUPERFICIES</span>
<span class="t " style="left:4.50px;top:77.70px;font-size:11px;line-height:11px;color:#3b3a39;transform:scaleX(0.9413);">FORMACIONES XEROFITICAS</span>
<span class="t " style="left:209.50px;top:77.70px;font-size:11px;line-height:11px;color:#3b3a39;transform:scaleX(0.9458);">PLAN DE TRABAJO PARA CORTAR, DESCEPAR O INTERVENIR FORMACIONES XEROFITICAS (LEY 20.283)</span>
<div class="b " style="left:0.50px;top:90.95px;width:769.00px;height:18.30px;background:#ededed;"></div>
<span class="t " style="left:4.50px;top:95.70px;font-size:11px;line-height:11px;color:#3b3a39;transform:scaleX(0.9519);">LENGA</span>
<span class="t " style="left:209.50px;top:95.70px;font-size:11px;line-height:11px;color:#3b3a39;transform:scaleX(0.9592);">PLAN DE MANEJO FORESTAL DE BOSQUE NATIVO LEY 20.283</span>
</div>
<div class="b " style="left:367.50px;top:488.00px;width:769.00px;height:1.00px;background:#6cb0ee;"></div>
<span class="t " style="left:371.50px;top:491.70px;font-size:11px;line-height:11px;color:#252423;font-weight:bold;transform:scaleX(1.0605);">Total</span>
<div class="b " style="left:368.50px;top:506.00px;width:670.00px;height:6.00px;background:#a8a8a8;border-radius:3px;"></div>
<div class="b " style="left:1137.50px;top:357.50px;width:6.00px;height:63.50px;background:#a8a8a8;border-radius:3px;"></div>
<span class="t " style="left:410.20px;top:540.20px;font-size:14px;line-height:14px;color:#252423;transform:scaleX(1.0286);">Suma de Superficie afecta por Tipo de bosque o formación xerofítica y Tipo Plan Manejo o Plan Trabajo</span>
<span class="t " style="left:410.20px;top:566.70px;font-size:10px;line-height:10px;color:#3b3a39;font-weight:bold;transform:scaleX(1.0348);">Tipo Plan Manejo o Plan Trabajo</span>
<div class="b " style="left:575.90px;top:567.80px;width:8.00px;height:8.00px;background:#118dff;border-radius:50%;"></div>
<span class="t " style="left:586.70px;top:566.70px;font-size:10px;line-height:10px;color:#605e5c;transform:scaleX(0.9618);">PLAN DE MANEJO ...</span>
<div class="b " style="left:686.10px;top:567.80px;width:8.00px;height:8.00px;background:#12239e;border-radius:50%;"></div>
<span class="t " style="left:696.90px;top:566.70px;font-size:10px;line-height:10px;color:#605e5c;transform:scaleX(0.9724);">PLAN DE MANEJO F...</span>
<div class="b " style="left:802.10px;top:567.80px;width:8.00px;height:8.00px;background:#e66c37;border-radius:50%;"></div>
<span class="t " style="left:813.00px;top:566.70px;font-size:10px;line-height:10px;color:#605e5c;transform:scaleX(0.9544);">PLAN DE MANEJ...</span>
<div class="b " style="left:901.60px;top:567.80px;width:8.00px;height:8.00px;background:#6b007b;border-radius:50%;"></div>
<span class="t " style="left:912.40px;top:566.70px;font-size:10px;line-height:10px;color:#605e5c;transform:scaleX(0.9930);">PLAN DE MAN...</span>
<div class="b " style="left:992.80px;top:567.80px;width:8.00px;height:8.00px;background:#e044a7;border-radius:50%;"></div>
<span class="t " style="left:1003.60px;top:566.70px;font-size:10px;line-height:10px;color:#605e5c;transform:scaleX(0.9454);">PLAN DE TRA...</span>
<span class="t" style="left:410.5px;top:737px;font-size:9px;line-height:9px;color:#252423;transform-origin:0 0;transform:rotate(-90deg) scaleX(1.0240);">Tipo de bosque o formación xerofí...</span>
<span class="t " style="left:464.50px;top:600.70px;font-size:10px;line-height:10px;color:#605e5c;transform:scaleX(0.9147);">ROBLE, RAULI, COIGUE</span>
<span class="t " style="left:537.00px;top:619.70px;font-size:10px;line-height:10px;color:#605e5c;transform:scaleX(0.9350);">LENGA</span>
<span class="t " style="left:495.00px;top:638.70px;font-size:10px;line-height:10px;color:#605e5c;transform:scaleX(0.8961);">SIEMPRE VERDE</span>
<span class="t " style="left:507.00px;top:658.70px;font-size:10px;line-height:10px;color:#605e5c;transform:scaleX(0.8812);">ESCLEROFILO</span>
<span class="t " style="left:472.00px;top:678.70px;font-size:10px;line-height:10px;color:#605e5c;transform:scaleX(0.9191);">COIGUE, RAULI, TEPA</span>
<span class="t " style="left:502.00px;top:697.70px;font-size:10px;line-height:10px;color:#605e5c;transform:scaleX(0.9377);">ROBLE HUALO</span>
<span class="t " style="left:435.00px;top:716.70px;font-size:10px;line-height:10px;color:#605e5c;transform:scaleX(0.9291);">FORMACIONES XEROFITICAS</span>
<div class="b " style="left:576.00px;top:590.00px;width:1.00px;height:147.00px;background:repeating-linear-gradient(to bottom,#d6d6d6 0,#d6d6d6 1px,transparent 1px,transparent 4px);"></div>
<span class="t " style="left:573.91px;top:741.70px;font-size:10px;line-height:10px;color:#605e5c;transform:scaleX(0.9300);">0</span>
<div class="b " style="left:658.40px;top:590.00px;width:1.00px;height:147.00px;background:repeating-linear-gradient(to bottom,#d6d6d6 0,#d6d6d6 1px,transparent 1px,transparent 4px);"></div>
<span class="t " style="left:653.73px;top:741.70px;font-size:10px;line-height:10px;color:#605e5c;transform:scaleX(0.9300);">50</span>
<div class="b " style="left:740.80px;top:590.00px;width:1.00px;height:147.00px;background:repeating-linear-gradient(to bottom,#d6d6d6 0,#d6d6d6 1px,transparent 1px,transparent 4px);"></div>
<span class="t " style="left:733.54px;top:741.70px;font-size:10px;line-height:10px;color:#605e5c;transform:scaleX(0.9300);">100</span>
<div class="b " style="left:823.70px;top:590.00px;width:1.00px;height:147.00px;background:repeating-linear-gradient(to bottom,#d6d6d6 0,#d6d6d6 1px,transparent 1px,transparent 4px);"></div>
<span class="t " style="left:816.44px;top:741.70px;font-size:10px;line-height:10px;color:#605e5c;transform:scaleX(0.9300);">150</span>
<div class="b " style="left:906.10px;top:590.00px;width:1.00px;height:147.00px;background:repeating-linear-gradient(to bottom,#d6d6d6 0,#d6d6d6 1px,transparent 1px,transparent 4px);"></div>
<span class="t " style="left:898.84px;top:741.70px;font-size:10px;line-height:10px;color:#605e5c;transform:scaleX(0.9300);">200</span>
<div class="b " style="left:989.00px;top:590.00px;width:1.00px;height:147.00px;background:repeating-linear-gradient(to bottom,#d6d6d6 0,#d6d6d6 1px,transparent 1px,transparent 4px);"></div>
<span class="t " style="left:981.74px;top:741.70px;font-size:10px;line-height:10px;color:#605e5c;transform:scaleX(0.9300);">250</span>
<div class="b " style="left:1071.40px;top:590.00px;width:1.00px;height:147.00px;background:repeating-linear-gradient(to bottom,#d6d6d6 0,#d6d6d6 1px,transparent 1px,transparent 4px);"></div>
<span class="t " style="left:1064.14px;top:741.70px;font-size:10px;line-height:10px;color:#605e5c;transform:scaleX(0.9300);">300</span>
<div class="b " style="left:576.50px;top:600.60px;width:425.20px;height:2.50px;background:#12239e;"></div>
<div class="b " style="left:576.50px;top:603.10px;width:86.30px;height:2.50px;background:#e66c37;"></div>
<div class="b " style="left:576.50px;top:620.00px;width:398.80px;height:2.50px;background:#12239e;"></div>
<div class="b " style="left:576.50px;top:639.00px;width:122.40px;height:2.50px;background:#12239e;"></div>
<div class="b " style="left:576.50px;top:641.50px;width:55.50px;height:2.50px;background:#e66c37;"></div>
<div class="b " style="left:576.50px;top:644.00px;width:17.10px;height:2.50px;background:#6b007b;"></div>
<div class="b " style="left:576.50px;top:658.60px;width:126.80px;height:2.50px;background:#12239e;"></div>
<div class="b " style="left:576.50px;top:661.10px;width:7.80px;height:2.50px;background:#e66c37;"></div>
<div class="b " style="left:576.50px;top:678.60px;width:131.60px;height:2.50px;background:#12239e;"></div>
<div class="b " style="left:576.50px;top:700.50px;width:5.80px;height:2.50px;background:#e66c37;"></div>
<div class="b " style="left:576.50px;top:724.90px;width:5.80px;height:2.50px;background:#e044a7;"></div>
<span class="t " style="left:770.00px;top:756.70px;font-size:9px;line-height:9px;color:#252423;transform:scaleX(1.0212);">Suma de Superficie afecta</span>
<div class="b " style="left:1081.10px;top:589.80px;width:5.90px;height:147.20px;background:#ededed;border-radius:3px;"></div>
<div class="b " style="left:1081.10px;top:589.80px;width:5.90px;height:128.80px;background:#a8a8a8;border-radius:3px;"></div>
<svg class="i" style="left:0.00px;top:765.00px;" width="1150" height="12" viewBox="0 0 1150 12" fill="none"><line x1="35.6" y1="6.4" x2="1149" y2="6.4" stroke="#141414" stroke-width="1.7" stroke-dasharray="1.55 2.19"/></svg>
</div>
<div id="filters">
<div class="b " style="left:1149.00px;top:144.00px;width:2.00px;height:647.00px;background:#d0cecc;"></div>
<div class="b " style="left:1150.50px;top:144.00px;width:214.50px;height:647.00px;background:#fff;"></div>
<div class="b " style="left:1150.50px;top:143.50px;width:214.50px;height:6.50px;background:linear-gradient(#e2e1df,#fff);"></div>
<svg class="i" style="left:1164.00px;top:157.60px;" width="20" height="17" viewBox="0 0 20 17" fill="none"><path d="M1.2 1.2 H19 L11.9 9.4 V16 H8.3 V9.4 Z" stroke="#201f1e" stroke-width="1.5" stroke-linejoin="miter"/></svg>
<span class="t " style="left:1193.70px;top:157.20px;font-size:19px;line-height:19px;color:#201f1e;transform:scaleX(0.9918);-webkit-text-stroke:0.38px #201f1e;">Filtros</span>
<svg class="i" style="left:1303.30px;top:158.50px;" width="16" height="11" viewBox="0 0 16 11" fill="none"><path d="M0.8 8.5 C2.5 3.5 5.3 1.5 8 1.5 C10.7 1.5 13.5 3.5 15.2 8.5" stroke="#252423" stroke-width="1.1"/><circle cx="8" cy="7" r="2.3" stroke="#252423" stroke-width="1.1"/></svg>
<svg class="i" style="left:1338.80px;top:158.40px;" width="15" height="15" viewBox="0 0 15 15" fill="none"><path d="M1 0.8 L7 7.4 L1 14 M7.6 0.8 L13.6 7.4 L7.6 14" stroke="#252423" stroke-width="1.4"/></svg>
<div class="b " style="left:1160.00px;top:197.00px;width:191.00px;height:35.00px;background:#fff;border:1px solid #8a8886;box-sizing:border-box;border-radius:2px;"></div>
<svg class="i" style="left:1172.50px;top:205.40px;" width="20" height="19" viewBox="0 0 20 19" fill="none"><circle cx="12.3" cy="7" r="6.2" stroke="#323130" stroke-width="1.1"/><path d="M7.9 11.5 L0.8 18.2" stroke="#323130" stroke-width="1.1"/></svg>
<span class="t " style="left:1207.30px;top:208.20px;font-size:14px;line-height:14px;color:#323130;transform:scaleX(1.0144);">Buscar</span>
<div class="b " style="left:1150.50px;top:236.60px;width:215.00px;height:1.00px;background:#e1dfdd;"></div>
<span class="t " style="left:1160.50px;top:260.20px;font-size:14px;line-height:14px;color:#484644;transform:scaleX(0.9787);">Filtros de esta página</span>
<span class="t " style="left:1337.90px;top:261.20px;font-size:13px;line-height:13px;color:#484644;transform:scaleX(1.1722);">...</span>
<div class="b " style="left:1160.00px;top:287.00px;width:196.00px;height:53.50px;background:#fff;border:1px solid #c8c6c4;box-sizing:border-box;border-radius:3px;"></div>
<span class="t " style="left:1177.80px;top:307.95px;font-size:14.5px;line-height:14.5px;color:#3b3a39;transform:scaleX(0.9557);">Agregar campos de dat...</span>
<span class="t " style="left:1160.50px;top:375.20px;font-size:14px;line-height:14px;color:#484644;transform:scaleX(0.9793);">Filtros de todas las páginas</span>
<span class="t " style="left:1337.90px;top:376.20px;font-size:13px;line-height:13px;color:#484644;transform:scaleX(1.1722);">...</span>
<div class="b " style="left:1160.00px;top:402.00px;width:196.00px;height:52.50px;background:#fff;border:1px solid #c8c6c4;box-sizing:border-box;border-radius:3px;"></div>
<span class="t " style="left:1177.80px;top:420.95px;font-size:14.5px;line-height:14.5px;color:#3b3a39;transform:scaleX(0.9557);">Agregar campos de dat...</span>
</div>
<div id="viz">
<div class="b " style="left:1365.00px;top:144.00px;width:212.50px;height:647.00px;background:#f3f2f1;"></div>
<div class="b " style="left:1365.00px;top:144.00px;width:2.00px;height:647.00px;background:#ebeae8;"></div>
<div class="b " style="left:1365.00px;top:144.00px;width:212.50px;height:2.00px;background:linear-gradient(#e0dfdd,#f3f2f1);"></div>
<span class="t " style="left:1376.20px;top:157.20px;font-size:19px;line-height:19px;color:#201f1e;transform:scaleX(0.9723);-webkit-text-stroke:0.38px #201f1e;">Visualizaciones</span>
<svg class="i" style="left:1553.40px;top:159.60px;" width="15" height="15" viewBox="0 0 15 15" fill="none"><path d="M1 0.8 L7 7.4 L1 14 M7.6 0.8 L13.6 7.4 L7.6 14" stroke="#252423" stroke-width="1.4"/></svg>
<span class="t " style="left:1376.10px;top:190.20px;font-size:14px;line-height:14px;color:#201f1e;transform:scaleX(1.0178);">Compilar visual</span>
<div class="b " style="left:1375.70px;top:210.50px;width:37.30px;height:37.80px;background:#d2d0ce;border-radius:2px;"></div>
<svg class="i" style="left:1365.50px;top:253.00px;" width="212" height="11" viewBox="0 0 212 11" fill="none"><path d="M0 10.1 H19.6 L29 1.9 L38.6 10.1 H212" stroke="#a19f9d" stroke-width="1.1"/></svg>
<div class="b " style="left:1365.50px;top:505.80px;width:212.00px;height:1.00px;background:#e1dfdd;"></div>
<span class="t " style="left:1380.70px;top:519.20px;font-size:14px;line-height:14px;color:#3b3a39;transform:scaleX(0.9476);">Valores</span>
<div class="b " style="left:1371.00px;top:541.00px;width:200.50px;height:32.50px;background:#fff;border:1px dashed #c8c6c4;box-sizing:border-box;border-radius:2px;"></div>
<span class="t " style="left:1383.80px;top:551.20px;font-size:14px;line-height:14px;color:#3b3a39;transform:scaleX(0.9849);">Agregar campos de datos a...</span>
<span class="t " style="left:1380.70px;top:589.20px;font-size:14px;line-height:14px;color:#323130;transform:scaleX(1.0250);-webkit-text-stroke:0.4px #323130;">Obtener detalles</span>
<span class="t " style="left:1380.70px;top:619.20px;font-size:14px;line-height:14px;color:#3b3a39;transform:scaleX(0.9836);">Entre varios informes</span>
<div class="b " style="left:1533.20px;top:616.50px;width:38.20px;height:18.80px;background:#fff;border:1px solid #605e5c;box-sizing:border-box;border-radius:10px;"></div>
<div class="b " style="left:1539.20px;top:621.20px;width:9.40px;height:9.40px;background:#605e5c;border-radius:50%;"></div>
<span class="t " style="left:1380.70px;top:651.20px;font-size:14px;line-height:14px;color:#3b3a39;transform:scaleX(1.0145);">Mantener todos los</span>
<span class="t " style="left:1380.70px;top:669.20px;font-size:14px;line-height:14px;color:#3b3a39;transform:scaleX(1.0404);">filtros</span>
<div class="b " style="left:1533.20px;top:647.90px;width:38.20px;height:17.80px;background:#605e5c;border-radius:10px;"></div>
<div class="b " style="left:1556.00px;top:652.00px;width:9.60px;height:9.60px;background:#fff;border-radius:50%;"></div>
<svg class="i" style="left:1539.50px;top:652.00px;" width="12" height="10" viewBox="0 0 12 10" fill="none"><path d="M0.9 5.4 L4.5 8.8 L10.8 1" stroke="#fff" stroke-width="2.2"/></svg>
<div class="b " style="left:1371.00px;top:696.00px;width:200.50px;height:30.00px;background:#fff;border:1px dashed #c8c6c4;box-sizing:border-box;border-radius:2px;"></div>
<span class="t " style="left:1381.80px;top:705.20px;font-size:14px;line-height:14px;color:#3b3a39;transform:scaleX(0.9886);">Agregue los campos de ob...</span>
</div>
<div id="datapane">
<div class="b " style="left:1577.00px;top:148.00px;width:2.00px;height:643.00px;background:#e4e2e0;"></div>
<div class="b " style="left:1578.50px;top:144.00px;width:21.50px;height:647.00px;background:#f3f2f1;"></div>
<div class="b " style="left:1577.00px;top:144.00px;width:23.00px;height:2.00px;background:linear-gradient(#e0dfdd,#f3f2f1);"></div>
<div class="b" style="left:1578.5px;top:150px;width:21.5px;height:200px;overflow:hidden;">
<span class="t " style="left:10.00px;top:7.20px;font-size:19px;line-height:19px;color:#201f1e;transform:scaleX(0.9700);-webkit-text-stroke:0.38px #201f1e;">Datos</span>
<div class="b " style="left:4.50px;top:47.50px;width:47.00px;height:30.50px;background:#fff;border:1px solid #605e5c;box-sizing:border-box;border-radius:2px;"></div>
<svg class="i" style="left:13.50px;top:55.00px;" width="19" height="17" viewBox="0 0 19 17" fill="none"><circle cx="11.3" cy="6.6" r="5.4" stroke="#323130" stroke-width="1.1"/><path d="M7.4 10.6 L1 16.6" stroke="#323130" stroke-width="1.1"/></svg>
<svg class="i" style="left:9.50px;top:95.50px;" width="8" height="14" viewBox="0 0 8 14" fill="none"><path d="M0.8 0.8 L7 7 L0.8 13.2" stroke="#8a8886" stroke-width="1.1"/></svg>
</div>
</div>
<svg class="i" style="left:0;top:0" width="36" height="300" viewBox="0 0 36 300" fill="none"><path d="M3.6 159 V174.2 H19.4" stroke="#605e5c" stroke-width="1.1"/><rect x="5.9" y="161.6" width="2.4000000000000004" height="10.599999999999994" stroke="#605e5c" stroke-width="1.1" fill="#f8f8f8"/><rect x="10.3" y="164.2" width="3.0999999999999996" height="8.0" stroke="#605e5c" stroke-width="1.1" fill="#f8f8f8"/><rect x="15.7" y="160" width="2.900000000000002" height="12.199999999999989" stroke="#605e5c" stroke-width="1.1" fill="#f8f8f8"/><rect x="2.6" y="204.5" width="18.4" height="16.9" stroke="#797775" stroke-width="1.1" fill="#fafafa"/><path d="M2.6 206.9 H21 M2.6 211.3 H21 M2.6 216.5 H21 M8.6 206.9 V221.4 M14.6 206.9 V221.4" stroke="#797775" stroke-width="1.1"/><rect x="1.4" y="256.1" width="8.5" height="8.4" stroke="#605e5c" stroke-width="1.1" fill="#fafafa"/><path d="M1.4 260.20000000000005 H9.9" stroke="#605e5c" stroke-width="1"/><rect x="13.3" y="250.4" width="8.5" height="8.4" stroke="#605e5c" stroke-width="1.1" fill="#fafafa"/><path d="M13.3 254.5 H21.8" stroke="#605e5c" stroke-width="1"/><rect x="13.3" y="261.9" width="8.5" height="8.4" stroke="#605e5c" stroke-width="1.1" fill="#fafafa"/><path d="M13.3 266.0 H21.8" stroke="#605e5c" stroke-width="1"/><path d="M6.6 256.1 V253.4 H13.3 M6.6 264.5 V267.6 H13.3" stroke="#605e5c" stroke-width="1.1"/></svg>
<svg class="i" style="left:1379.70px;top:276.90px;" width="21.4" height="21.4" viewBox="0 0 21.4 21.4" fill="none"><path d="M0.6 0 V20.9 H21.4" stroke="#252423" stroke-width="1.2"/><rect x="0.6" y="2.6" width="5.40" height="4.90" fill="#fff" stroke="#8a8886" stroke-width="1"/><rect x="6" y="2.6" width="8.50" height="4.90" fill="#83beec" stroke="#1266bd" stroke-width="1"/><rect x="0.6" y="12.1" width="7.90" height="5.20" fill="#fff" stroke="#8a8886" stroke-width="1"/><rect x="8.5" y="12.1" width="9.50" height="5.20" fill="#c8c6c4" stroke="#8a8886" stroke-width="1"/></svg>
<svg class="i" style="left:1412.50px;top:276.90px;" width="21.4" height="21.4" viewBox="0 0 21.4 21.4" fill="none"><path d="M0.6 0 V20.9 H21.4" stroke="#252423" stroke-width="1.2"/><rect x="4.5" y="6.3" width="5.00" height="7.70" fill="#83beec" stroke="#1266bd" stroke-width="1"/><rect x="4.5" y="14" width="5.00" height="6.90" fill="#fff" stroke="#8a8886" stroke-width="1"/><rect x="14.5" y="2.6" width="4.80" height="9.90" fill="#c8c6c4" stroke="#8a8886" stroke-width="1"/><rect x="14.5" y="12.5" width="4.80" height="8.40" fill="#fff" stroke="#8a8886" stroke-width="1"/></svg>
<svg class="i" style="left:1445.30px;top:276.90px;" width="21.4" height="21.4" viewBox="0 0 21.4 21.4" fill="none"><path d="M0.6 0 V21" fill="none" stroke="#8a8886" stroke-width="1.2" /><rect x="0.6" y="1.3" width="20.20" height="4.20" fill="#83beec" stroke="#1266bd" stroke-width="1"/><rect x="0.6" y="6.2" width="10.90" height="3.90" fill="#fff" stroke="#8a8886" stroke-width="1"/><rect x="0.6" y="10.8" width="8.30" height="3.90" fill="#c8c6c4" stroke="#8a8886" stroke-width="1"/><rect x="0.6" y="14.7" width="14.90" height="3.90" fill="#fff" stroke="#8a8886" stroke-width="1"/><path d="M0.6 20.6 H21.4" fill="none" stroke="#c8c6c4" stroke-width="1.6" /></svg>
<svg class="i" style="left:1478.10px;top:276.90px;" width="21.4" height="21.4" viewBox="0 0 21.4 21.4" fill="none"><path d="M0.6 0 V20.9 H21.4" stroke="#252423" stroke-width="1.2"/><rect x="2.5" y="1.3" width="4.30" height="19.60" fill="#83beec" stroke="#1266bd" stroke-width="1"/><rect x="6.8" y="8.5" width="4.20" height="12.40" fill="#fff" stroke="#8a8886" stroke-width="1"/><rect x="11" y="12" width="4.50" height="8.90" fill="#c8c6c4" stroke="#8a8886" stroke-width="1"/><rect x="15.5" y="6" width="4.50" height="14.90" fill="#fff" stroke="#8a8886" stroke-width="1"/></svg>
<svg class="i" style="left:1510.90px;top:276.90px;" width="21.4" height="21.4" viewBox="0 0 21.4 21.4" fill="none"><path d="M0.6 0 V20.9 H21.4" stroke="#252423" stroke-width="1.2"/><rect x="0.6" y="2.6" width="4.40" height="4.90" fill="#fff" stroke="#8a8886" stroke-width="1"/><rect x="5" y="2.6" width="14.00" height="4.90" fill="#83beec" stroke="#1266bd" stroke-width="1"/><rect x="0.6" y="12.1" width="12.40" height="5.20" fill="#fff" stroke="#8a8886" stroke-width="1"/><rect x="13" y="12.1" width="6.00" height="5.20" fill="#c8c6c4" stroke="#8a8886" stroke-width="1"/></svg>
<svg class="i" style="left:1543.70px;top:276.90px;" width="21.4" height="21.4" viewBox="0 0 21.4 21.4" fill="none"><path d="M0.6 0 V20.9 H21.4" stroke="#252423" stroke-width="1.2"/><rect x="4.5" y="2.6" width="5.00" height="13.40" fill="#83beec" stroke="#1266bd" stroke-width="1"/><rect x="4.5" y="16" width="5.00" height="4.90" fill="#fff" stroke="#8a8886" stroke-width="1"/><rect x="14.5" y="2.6" width="4.80" height="5.90" fill="#c8c6c4" stroke="#8a8886" stroke-width="1"/><rect x="14.5" y="8.5" width="4.80" height="12.40" fill="#fff" stroke="#8a8886" stroke-width="1"/></svg>
<svg class="i" style="left:1379.70px;top:309.70px;" width="21.4" height="21.4" viewBox="0 0 21.4 21.4" fill="none"><path d="M0.6 0 V20.9 H21.4" stroke="#252423" stroke-width="1.2"/><path d="M1 15.7 L14.1 3.9 L21.3 11.1" fill="none" stroke="#1266bd" stroke-width="1.3" /><path d="M1 11.8 L7.6 5.2 L13.5 10.5 L20.7 3.9" fill="none" stroke="#252423" stroke-width="1.2" /></svg>
<svg class="i" style="left:1412.50px;top:309.70px;" width="21.4" height="21.4" viewBox="0 0 21.4 21.4" fill="none"><path d="M11 9 L16 0 L21 10 V21 H11 Z" fill="#c8c6c4" stroke="#8a8886" stroke-width="1" /><path d="M0.6 12.5 L7.5 2 L13 10 L6 17.5 Z" fill="#fff" stroke="#252423" stroke-width="1.1" /><path d="M0.6 12.5 L6 17.5 L13 8.8 L21 21 H0.6 Z" fill="#83beec" stroke="#1266bd" stroke-width="1.1" /></svg>
<svg class="i" style="left:1445.30px;top:309.70px;" width="21.4" height="21.4" viewBox="0 0 21.4 21.4" fill="none"><path d="M0.6 10.8 L7.3 17.2 L14.5 10.8 L21 16.4 V20.6 H0.6 Z" fill="#fafafa" stroke="#8a8886" stroke-width="1" /><path d="M0.6 4 L7.3 10 L14.1 2.9 L17.3 6 H21 V16.4 L14.5 10.8 L7.3 17.2 L0.6 10.8 Z" fill="#83beec" stroke="#1266bd" stroke-width="1.2" /><path d="M0.6 0 V20.9" fill="none" stroke="#252423" stroke-width="1.2" /></svg>
<svg class="i" style="left:1478.10px;top:309.70px;" width="21.4" height="21.4" viewBox="0 0 21.4 21.4" fill="none"><path d="M0.6 0 V20.9 H21.4" stroke="#252423" stroke-width="1.2"/><rect x="4" y="2.6" width="4.20" height="11.40" fill="#83beec" stroke="#1266bd" stroke-width="1"/><rect x="4" y="14" width="4.20" height="6.90" fill="#fff" stroke="#8a8886" stroke-width="1"/><rect x="13.5" y="2.6" width="4.80" height="7.40" fill="#c8c6c4" stroke="#8a8886" stroke-width="1"/><rect x="13.5" y="10" width="4.80" height="10.90" fill="#fff" stroke="#8a8886" stroke-width="1"/><path d="M1.5 19 L7.5 11.5 L12.5 16 L20.5 9" fill="none" stroke="#252423" stroke-width="1.2" /></svg>
<svg class="i" style="left:1510.90px;top:309.70px;" width="21.4" height="21.4" viewBox="0 0 21.4 21.4" fill="none"><path d="M0.6 0 V20.9 H21.4" stroke="#252423" stroke-width="1.2"/><rect x="3.5" y="9" width="5.00" height="11.90" fill="#83beec" stroke="#1266bd" stroke-width="1"/><rect x="8.5" y="1.5" width="4.50" height="19.40" fill="#fff" stroke="#252423" stroke-width="1"/><rect x="14.5" y="6" width="4.50" height="14.90" fill="#c8c6c4" stroke="#8a8886" stroke-width="1"/><path d="M1.5 18.5 L8 11 L13 16.5 L20.8 8" fill="none" stroke="#252423" stroke-width="1.2" /></svg>
<svg class="i" style="left:1543.70px;top:309.70px;" width="21.4" height="21.4" viewBox="0 0 21.4 21.4" fill="none"><path d="M2 4 C7 4 7 8.5 11 8.5 C15 8.5 15 3.5 20.5 3 V8 C15 8.5 15 13 11 13 C7 13 7 9 2 9 Z" fill="#c8c6c4" stroke="#8a8886" stroke-width="0.8" /><rect x="2" y="13.5" width="4.00" height="4.00" fill="#f2a93b"/><rect x="16.5" y="13.5" width="4.00" height="4.00" fill="#f2a93b"/><rect x="9" y="9.5" width="4.00" height="3.00" fill="#f2a93b"/><path d="M2 9.5 C6 9.5 7 16.5 11 16.5 C15 16.5 16 9 20.5 8.5 V12.5 C16 13 15 19 11 19 C7 19 6 13.5 2 13.5 Z" fill="#83beec" stroke="#1266bd" stroke-width="0.9" /><path d="M0.6 0 V20.9 H21.4" stroke="#252423" stroke-width="1.2"/></svg>
<svg class="i" style="left:1379.70px;top:342.50px;" width="21.4" height="21.4" viewBox="0 0 21.4 21.4" fill="none"><path d="M0.6 0 V20.9 H21.4" stroke="#252423" stroke-width="1.2"/><rect x="2.5" y="5.5" width="4.00" height="15.40" fill="#fff" stroke="#252423" stroke-width="1.1"/><rect x="8.5" y="5.5" width="3.50" height="6.50" fill="#c8c6c4" stroke="#8a8886" stroke-width="1"/><rect x="12" y="1.5" width="2.50" height="9.50" fill="#83beec" stroke="#1266bd" stroke-width="1"/><rect x="14.5" y="1.5" width="4.50" height="19.40" fill="#fff" stroke="#252423" stroke-width="1.1"/><path d="M6.5 12 H8.5 V20.9" fill="none" stroke="#252423" stroke-width="1.1" /></svg>
<svg class="i" style="left:1412.50px;top:342.50px;" width="21.4" height="21.4" viewBox="0 0 21.4 21.4" fill="none"><rect x="0.6" y="1.5" width="20.40" height="6.40" fill="#83beec" stroke="#1266bd" stroke-width="1.2"/><rect x="3.2" y="7.9" width="15.20" height="6.00" fill="#83beec" stroke="#1266bd" stroke-width="1.2"/><rect x="6.2" y="13.9" width="9.20" height="5.90" fill="#83beec" stroke="#1266bd" stroke-width="1.2"/></svg>
<svg class="i" style="left:1445.30px;top:342.50px;" width="21.4" height="21.4" viewBox="0 0 21.4 21.4" fill="none"><path d="M0.6 0 V20.9 H21.4" stroke="#252423" stroke-width="1.2"/><rect x="14.6" y="1.3" width="3.20" height="3.20" fill="#323130"/><rect x="3.6" y="4.6" width="3.00" height="3.00" fill="#9cc9ee"/><rect x="9.4" y="8.2" width="3.00" height="3.00" fill="#9cc9ee"/><rect x="15.2" y="12.6" width="3.20" height="3.20" fill="#9cc9ee"/><rect x="3.4" y="14.2" width="3.20" height="3.20" fill="#201f1e"/></svg>
<svg class="i" style="left:1478.10px;top:342.50px;" width="21.4" height="21.4" viewBox="0 0 21.4 21.4" fill="none"><circle cx="10.7" cy="10.7" r="9.9" fill="#fdfdfd" stroke="#252423" stroke-width="1.2"/><path d="M10.7 10.7 V0.8 A9.9 9.9 0 0 1 17.8 17.6 Z" fill="#83beec" stroke="#1266bd" stroke-width="1.2" /></svg>
<svg class="i" style="left:1510.90px;top:342.50px;" width="21.4" height="21.4" viewBox="0 0 21.4 21.4" fill="none"><circle cx="10.7" cy="10.7" r="7.4" fill="none" stroke="#83beec" stroke-width="5"/><circle cx="10.7" cy="10.7" r="9.9" fill="none" stroke="#1f77cf" stroke-width="1.1"/><circle cx="10.7" cy="10.7" r="4.8" fill="none" stroke="#1f77cf" stroke-width="1.1"/><path d="M0.8 10.7 A9.9 9.9 0 0 1 10.7 0.8 V5.9 A4.8 4.8 0 0 0 5.9 10.7 Z" fill="#fafafa" stroke="#484644" stroke-width="1" /></svg>
<svg class="i" style="left:1543.70px;top:342.50px;" width="21.4" height="21.4" viewBox="0 0 21.4 21.4" fill="none"><rect x="10.4" y="0.6" width="10.60" height="20.30" fill="#fdfdfd" stroke="#484644" stroke-width="1.1"/><path d="M10.4 6.5 H21 M14.6 6.5 V20.9 M14.6 13.6 H21" fill="none" stroke="#484644" stroke-width="1.1" /><rect x="0.6" y="0.6" width="9.80" height="20.30" fill="#83beec" stroke="#1266bd" stroke-width="1.2"/><path d="M0.6 11 H10.4" fill="none" stroke="#1266bd" stroke-width="1.2" /></svg>
<svg class="i" style="left:1379.70px;top:375.30px;" width="21.4" height="21.4" viewBox="0 0 21.4 21.4" fill="none"><circle cx="11.9" cy="9.1" r="6.1" fill="#fbfdfb" stroke="#323130" stroke-width="1.1"/><path d="M8 5.2 C9.6 3.6 11.2 4 11 5.8 C10.6 7.4 8.8 8.6 8 10.4 C7.2 11.2 6.6 9.6 6.8 8 Z M13 3.6 C15 3.6 17 5.2 17.2 7.2 C16 7.8 14.2 7 13.2 5.6 Z M10 11.6 C11.6 10.8 14 11.2 15 12.6 C14.4 14.2 12.4 14.8 10.8 14.2 C9.6 13.6 9.4 12.4 10 11.6 Z" fill="#1f9a3c" /><path d="M10.2 0.7 A8.6 8.6 0 1 0 18 15.6" fill="none" stroke="#252423" stroke-width="1.3" /><path d="M10.9 17.9 V19.8" fill="none" stroke="#252423" stroke-width="1.3" /><path d="M3.4 20.5 H18.8" fill="none" stroke="#323130" stroke-width="1.7" /></svg>
<svg class="i" style="left:1412.50px;top:375.30px;" width="21.4" height="21.4" viewBox="0 0 21.4 21.4" fill="none"><path d="M9.1 4.1 H13.75 L15.6 1.25 H20.9 V9.85 H9.1 Z" fill="#c8c6c4" stroke="#484644" stroke-width="1.1" /><path d="M0 10 H11.9 L10 15.3 L9.4 19.7 L6.25 18.4 L2.5 15.9 L0.3 12.8 Z" fill="#c8c6c4" stroke="#484644" stroke-width="1.1" /><path d="M0 1.25 H5 L6.25 2.5 L8.75 4.1 L9.1 9.85 H1.6 L2.5 6.6 L0.6 2.8 Z" fill="#83beec" stroke="#1a6fc9" stroke-width="1.2" /><path d="M12.2 10 H20.9 L20.6 14.1 L18.1 16.6 L14.4 17.8 L11.9 17.5 L9.7 19.4 L10.3 15.3 Z" fill="#83beec" stroke="#1a6fc9" stroke-width="1.2" /></svg>
<svg class="i" style="left:1445.30px;top:375.30px;" width="21.4" height="21.4" viewBox="0 0 21.4 21.4" fill="none"><path d="M14.4 -1.25 L1.6 19.1 L12.8 15.9 Z" fill="#3aa0d8" /><path d="M14.4 -1.25 L12.8 15.9 L20 22.2 Z" fill="#3d9fe0" /><path d="M14.4 -1.25 L16.2 7 L12.8 15.9 Z" fill="#5cc0ea" /><path d="M12.8 15.9 L15.6 10.5 L20 22.2 Z" fill="#0f7ad8" /></svg>
<svg class="i" style="left:1478.10px;top:375.30px;" width="21.4" height="21.4" viewBox="0 0 21.4 21.4" fill="none"><path d="M0.9 15.4 A9.9 9.9 0 0 1 20.7 15.4 H16.4 A5.6 5.6 0 0 0 5.2 15.4 Z" fill="#fff" stroke="#252423" stroke-width="1.1" /><path d="M6.5 6.5 A9.9 9.9 0 0 1 20.7 15.4 H16.4 A5.6 5.6 0 0 0 9 10.9 Z" fill="#83beec" stroke="#1266bd" stroke-width="1.1" /><path d="M10.4 15.2 L14.6 10.6" fill="none" stroke="#252423" stroke-width="1.6" /></svg>
<svg class="i" style="left:1510.90px;top:375.30px;" width="21.4" height="21.4" viewBox="0 0 21.4 21.4" fill="none"><rect x="0.6" y="3" width="20.40" height="15.60" fill="#fbfbfb" stroke="#252423" stroke-width="1.2"/><path d="M3 15.6 H18.6" fill="none" stroke="#c8c6c4" stroke-width="1" /><text x="10.8" y="14" font-family="Liberation Sans, sans-serif" font-size="9.4" fill="#6fb1e8" text-anchor="middle" textLength="15" lengthAdjust="spacingAndGlyphs">123</text></svg>
<svg class="i" style="left:1543.70px;top:375.30px;" width="21.4" height="21.4" viewBox="0 0 21.4 21.4" fill="none"><rect x="0.6" y="0.6" width="20.40" height="20.40" fill="#fbfbfb" stroke="#8a8886" stroke-width="1.2"/><path d="M3.6 3.6 V17.8" fill="none" stroke="#c8c6c4" stroke-width="1.4" /><path d="M6.4 5.6 H17.4 M6.4 14.6 H17.4" fill="none" stroke="#1266bd" stroke-width="2" /><path d="M6.4 10.1 H14" fill="none" stroke="#1266bd" stroke-width="2" /></svg>
<svg class="i" style="left:1379.70px;top:408.10px;" width="21.4" height="21.4" viewBox="0 0 21.4 21.4" fill="none"><rect x="0.6" y="1.4" width="20.40" height="17.40" fill="#fbfbfb" stroke="#252423" stroke-width="1.2"/><path d="M3 11.5 L6.4 5.4 L9.8 11.5 Z" fill="#6cc07a" stroke="#2a9a3a" stroke-width="1" /><path d="M12 4.4 H18.8 L15.4 10.5 Z" fill="#f06a6a" stroke="#d92b2b" stroke-width="1" /><path d="M3 15.2 H18.4" fill="none" stroke="#c8c6c4" stroke-width="1.2" /></svg>
<svg class="i" style="left:1412.50px;top:408.10px;" width="21.4" height="21.4" viewBox="0 0 21.4 21.4" fill="none"><rect x="0.7" y="0.7" width="20.30" height="20.00" fill="#fbfbfb" stroke="#605e5c" stroke-width="1.4"/><rect x="1.4" y="1.4" width="18.90" height="2.20" fill="#dddcdb"/><path d="M0.7 4 H21" fill="none" stroke="#605e5c" stroke-width="1.3" /><rect x="4.2" y="8" width="3.20" height="3.00" fill="#c8c6c4" stroke="#8a8886" stroke-width="0.9"/><rect x="4.2" y="13.6" width="3.20" height="3.00" fill="#c8c6c4" stroke="#8a8886" stroke-width="0.9"/><path d="M11 11 H22.4 L18.4 15.8 V22.2 H15 V15.8 Z" fill="#fff" stroke="#605e5c" stroke-width="1.4" /></svg>
<svg class="i" style="left:1445.30px;top:408.10px;" width="21.4" height="21.4" viewBox="0 0 21.4 21.4" fill="none"><rect x="0.7" y="0.7" width="20.30" height="20.00" fill="#fbfbfb" stroke="#605e5c" stroke-width="1.5"/><rect x="1.4" y="1.4" width="18.90" height="2.20" fill="#dddcdb"/><path d="M0.7 9.6 H21 M0.7 15 H21 M7.6 4 V20.7 M14.2 4 V20.7" fill="none" stroke="#a19f9d" stroke-width="1.3" /><path d="M0.7 4.2 H21" fill="none" stroke="#605e5c" stroke-width="1.3" /></svg>
<svg class="i" style="left:1478.10px;top:408.10px;" width="21.4" height="21.4" viewBox="0 0 21.4 21.4" fill="none"><rect x="0.7" y="0.7" width="20.30" height="20.00" fill="#fbfbfb" stroke="#605e5c" stroke-width="1.5"/><rect x="1.4" y="1.4" width="18.90" height="2.20" fill="#dddcdb"/><rect x="14.2" y="4.2" width="6.20" height="16.00" fill="#83beec"/><rect x="1.4" y="15" width="19.00" height="5.20" fill="#83beec"/><path d="M0.6 3.8 H21 M0.6 9.4 H14.2 M0.6 15 H14.2 M7.4 3.8 V15 M14.2 3.8 V15" fill="none" stroke="#8a8886" stroke-width="1.1" /><path d="M14.2 9.4 H21 M14.2 15 H21 M7.4 15 V20.8 M14.2 15 V20.8" fill="none" stroke="#1266bd" stroke-width="1" /></svg>
<svg class="i" style="left:1510.90px;top:408.10px;" width="21.4" height="21.4" viewBox="0 0 21.4 21.4" fill="none"><text x="10.2" y="17.6" font-family="Liberation Sans, sans-serif" font-size="17.8" font-weight="bold" fill="#1a78c8" text-anchor="middle" textLength="10.6" lengthAdjust="spacingAndGlyphs">R</text></svg>
<svg class="i" style="left:1543.70px;top:408.10px;" width="21.4" height="21.4" viewBox="0 0 21.4 21.4" fill="none"><text x="10.7" y="15.6" font-family="Liberation Sans, sans-serif" font-size="18.6" font-weight="bold" fill="#1a78c8" text-anchor="middle" textLength="21" lengthAdjust="spacingAndGlyphs">Py</text></svg>
<svg class="i" style="left:1379.70px;top:440.90px;" width="21.4" height="21.4" viewBox="0 0 21.4 21.4" fill="none"><path d="M0.6 0 V20.9 H21.4" fill="none" stroke="#252423" stroke-width="1.2" /><path d="M0.6 4.6 H15" fill="none" stroke="#1266bd" stroke-width="1.2" /><path d="M17.6 1.8 L20.4 4.6 L17.6 7.4 L14.8 4.6 Z" fill="#83beec" stroke="#1266bd" stroke-width="1" /><path d="M0.6 10 H10.4 M0.6 15 H6" fill="none" stroke="#605e5c" stroke-width="1.4" /><circle cx="12" cy="10" r="1.6" fill="#c8c6c4" stroke="#605e5c" stroke-width="1"/><circle cx="7.6" cy="15" r="1.6" fill="#c8c6c4" stroke="#605e5c" stroke-width="1"/></svg>
<svg class="i" style="left:1412.50px;top:440.90px;" width="21.4" height="21.4" viewBox="0 0 21.4 21.4" fill="none"><path d="M8 10 H11 M14 3 H11 V17.2 H14 M11 10 H14" fill="none" stroke="#252423" stroke-width="1.2" /><rect x="0.6" y="7.6" width="7.40" height="4.80" fill="#83beec" stroke="#1266bd" stroke-width="1"/><rect x="14" y="0.6" width="7.40" height="5.00" fill="#83beec" stroke="#1266bd" stroke-width="1"/><rect x="14" y="7.6" width="7.40" height="5.00" fill="#83beec" stroke="#1266bd" stroke-width="1"/><rect x="14" y="14.6" width="7.40" height="5.40" fill="#83beec" stroke="#1266bd" stroke-width="1"/></svg>
<svg class="i" style="left:1445.30px;top:440.90px;" width="21.4" height="21.4" viewBox="0 0 21.4 21.4" fill="none"><path d="M0.8 1.8 H21 V15.6 H9 L4.6 20.4 V15.6 H0.8 Z" fill="#fbfbfb" stroke="#1266bd" stroke-width="1.4" /></svg>
<svg class="i" style="left:1478.10px;top:440.90px;" width="21.4" height="21.4" viewBox="0 0 21.4 21.4" fill="none"><path d="M2.2 0.7 H12 L17.4 6.2 V20.9 H2.2 Z" fill="#fbfbfb" stroke="#252423" stroke-width="1.2" /><path d="M12 0.7 V6.2 H17.4" fill="none" stroke="#252423" stroke-width="1.1" /><path d="M2.2 6.4 L4.6 8.8 L2.2 11.2 L-0.2 8.8 Z" fill="#83beec" stroke="#1266bd" stroke-width="0.9" /><path d="M6.4 9.8 H14.2 M6.4 13.2 H12" fill="none" stroke="#6fb1e8" stroke-width="1.2" /></svg>
<svg class="i" style="left:1510.90px;top:440.90px;" width="21.4" height="21.4" viewBox="0 0 21.4 21.4" fill="none"><path d="M4.4 1.2 H17 V8 C17 12.4 13.6 13.6 12.2 14 L13.6 18 H7.8 L9.2 14 C7.8 13.6 4.4 12.4 4.4 8 Z" fill="#fbfbfb" stroke="#252423" stroke-width="1.3" /><path d="M4.4 3 H1 C1 7.6 2.6 9.2 5 9.6 M17 3 H20.4 C20.4 7.6 18.8 9.2 16.4 9.6" fill="none" stroke="#252423" stroke-width="1.3" /><rect x="4.8" y="1.2" width="11.80" height="2.20" fill="#83beec" stroke="#1266bd" stroke-width="0.9"/><rect x="5.4" y="18.2" width="10.60" height="2.40" fill="#83beec" stroke="#1266bd" stroke-width="0.9"/></svg>
<svg class="i" style="left:1543.70px;top:440.90px;" width="21.4" height="21.4" viewBox="0 0 21.4 21.4" fill="none"><path d="M2.4 0.5 H12.6 L18.6 6.6 V21.3 H2.4 Z" fill="#fbfbfb" stroke="#484644" stroke-width="1.3" /><path d="M12.6 0.5 V6.6 H18.6" fill="none" stroke="#484644" stroke-width="1.2" /><path d="M5.6 14.6 V19 M10.2 16.4 V19 M14.8 11 V19" fill="none" stroke="#323130" stroke-width="2.2" /></svg>
<svg class="i" style="left:1379.70px;top:473.70px;" width="21.4" height="21.4" viewBox="0 0 21.4 21.4" fill="none"><rect x="0.6" y="3" width="20.40" height="15.60" fill="#fbfbfb" stroke="#8a8886" stroke-width="1.4"/><path d="M3 16 H18.6" fill="none" stroke="#c8c6c4" stroke-width="1" /><text x="12.4" y="14" font-family="Liberation Sans, sans-serif" font-size="9.4" fill="#3a96dd" text-anchor="middle" textLength="14" lengthAdjust="spacingAndGlyphs">123</text><path d="M-2 -1 H9 L5 8 L2 14 H-2 Z" fill="#f3f2f1" /><path d="M2.4 -0.6 H8.4 L4.8 5.4 H7.8 L-0.6 13.4 L1.8 7 H-1.2 Z" fill="#f9b04a" stroke="#e6821e" stroke-width="0.9" /></svg>
<svg class="i" style="left:1412.50px;top:473.70px;" width="21.4" height="21.4" viewBox="0 0 21.4 21.4" fill="none"><path d="M0.8 1.2 H20.6 V12 M15 20.6 H0.8 Z" fill="none" stroke="#1266bd" stroke-width="1.5" /><path d="M0.8 1.2 H20.6 V11 H17 M14 20.6 H0.8 V1.2" fill="none" stroke="#1266bd" stroke-width="1.5" /><path d="M9.5 16 C10 12 12 12 12.5 9 C13 6.5 15.5 6 17.5 4.5 L19.6 6.5 C17.5 8.5 16 9.5 15.5 12 C15 14.5 13 15.5 12.5 19 Z" fill="#6fb1e8" /><path d="M-0.4 1.6 C-0.4 -1.2 5.6 -1.2 5.6 1.6 V6.6 L2.6 10.6 L-0.4 6.6 Z" fill="#e8731a" stroke="#d4600c" stroke-width="0.8" /><circle cx="2.6" cy="3.6" r="1.4" fill="#fff"/><circle cx="17.6" cy="17.8" r="3.2" fill="#e8731a"/><circle cx="20" cy="11.8" r="1.8" fill="#e8731a"/></svg>
<svg class="i" style="left:1445.30px;top:473.70px;" width="21.4" height="21.4" viewBox="0 0 21.4 21.4" fill="none"><path d="M0.8 10.6 L8.6 2 Q10.7 0.4 12.8 2 L20.6 10.6 L12.8 19.2 Q10.7 20.8 8.6 19.2 Z" fill="#fbfbfb" stroke="#8a1fa0" stroke-width="1.3" /><path d="M7.4 3.4 L15.6 12.6 L10.8 18 M14 3.4 L5.8 12.6 L10.6 18" fill="none" stroke="#9c3fb4" stroke-width="1.2" /></svg>
<svg class="i" style="left:1478.10px;top:473.70px;" width="21.4" height="21.4" viewBox="0 0 21.4 21.4" fill="none"><path d="M1 2 H13.6 L21 10.7 L13.6 19.4 H1 L8.4 10.7 Z" fill="#fbfbfb" stroke="#1f6fd6" stroke-width="1.4" stroke-linejoin="round"/><path d="M6.4 19 L16.2 7.4 M11 19 L18.6 10" fill="none" stroke="#1f6fd6" stroke-width="1.2" /></svg>
<svg class="i" style="left:1510.90px;top:473.70px;" width="21.4" height="21.4" viewBox="0 0 21.4 21.4" fill="none"><rect x="2.4" y="7.6" width="1.50" height="1.50" fill="#201f1e"/><rect x="9.9" y="7.6" width="1.50" height="1.50" fill="#201f1e"/><rect x="17.4" y="7.6" width="1.50" height="1.50" fill="#201f1e"/></svg>
<svg class="i" style="left:0;top:0" width="1600" height="260" viewBox="0 0 1600 260" fill="none"><path d="M1380.5 216.5 H1402.8" stroke="#252423" stroke-width="1.1"/><rect x="1380.8" y="221.4" width="27.6" height="9.9" fill="#15796b" stroke="#201f1e" stroke-width="1.1" stroke-dasharray="1.4 1.2"/><rect x="1380.8" y="234.1" width="27.6" height="10.0" fill="#15796b" stroke="#201f1e" stroke-width="1.1" stroke-dasharray="1.4 1.2"/><path d="M1462 243.4 H1458.7 V216.6 H1470.4 L1478.8 224.6 V226.4 M1470.4 216.6 V224.6 H1478.8" stroke="#252423" stroke-width="1.2" fill="none"/><path d="M1486.4 225.6 L1475.8 238.8 L1473 236.4 Z" fill="#f3f2f1" stroke="#252423" stroke-width="1.1" stroke-linejoin="round"/><path d="M1473 236.4 C1470.4 236 1468.6 237.6 1468.2 239.4 C1467.8 241 1466.4 241.8 1464.4 241.6 C1468.4 244.4 1474.6 243.4 1475.8 238.8 Z" fill="#f3f2f1" stroke="#252423" stroke-width="1.1" stroke-linejoin="round"/></svg>
</div>
</body></html>
